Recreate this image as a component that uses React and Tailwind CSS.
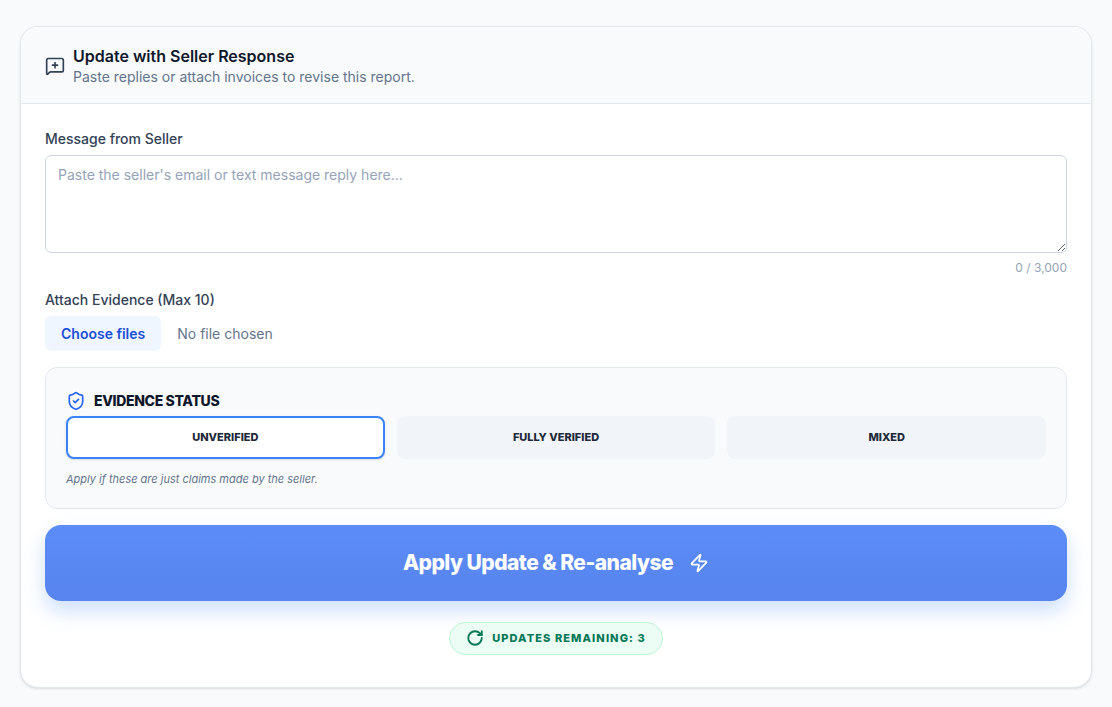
import React from "react";
import { MessageSquarePlus, ShieldCheck, Zap, RotateCw } from "lucide-react";

export default function App() {
  return (
    <div className="min-h-[707px] bg-[#f8fafc] pt-[26px] px-5 pb-4" style={{ fontFamily: "Inter, 'Noto Sans', sans-serif" }}>
      <div className="w-[1072px] bg-white border border-[#e2e8f0] rounded-[18px] shadow-sm overflow-hidden">
        <div className="flex items-start gap-2 bg-[#f8fafc] border-b border-[#e2e8f0] px-6 pt-[19px] h-[77px]">
          <MessageSquarePlus className="w-5 h-5 text-[#334155] mt-[10px]" strokeWidth={2} />
          <div>
            <div className="text-[16px] font-semibold text-[#0f172a] leading-[20px]">Update with Seller Response</div>
            <div className="text-[14px] text-[#64748b] leading-[22px]">Paste replies or attach invoices to revise this report.</div>
          </div>
        </div>
        <div className="px-6 pt-[24px] pb-8">
          <div className="text-[14px] text-[#334155] font-medium mb-[6px]">Message from Seller</div>
          <textarea className="block w-full h-[98px] border border-[#cbd5e1] rounded-md px-3 py-2 text-[14px] text-[#334155] placeholder-[#94a3b8] outline-none" placeholder="Paste the seller's email or text message reply here..." />
          <div className="text-right text-[12px] text-[#94a3b8] mt-[6px]">0 / 3,000</div>
          <div className="text-[14px] text-[#334155] font-medium mt-[12px]">Attach Evidence (Max 10)</div>
          <div className="flex items-center gap-4 mt-[6px]">
            <div className="bg-[#eff6ff] text-[#1d4ed8] font-semibold text-[14px] rounded-md px-4 h-[35px] flex items-center">Choose files</div>
            <div className="text-[14px] text-[#64748b]">No file chosen</div>
          </div>
          <div className="mt-[16px] border border-[#e2e8f0] bg-[#f8fafc] rounded-xl px-5 pt-[22px] pb-[20px]">
            <div className="flex items-center gap-2 mb-[5px]">
              <ShieldCheck className="w-5 h-5 text-[#2563eb]" />
              <span className="text-[14px] font-extrabold tracking-tight text-[#0f172a]">EVIDENCE STATUS</span>
            </div>
            <div className="grid grid-cols-3 gap-3">
              <div className="h-[43px] rounded-lg bg-white border-2 border-[#3b82f6] shadow-sm flex items-center justify-center text-[11px] font-extrabold text-[#1e293b]">UNVERIFIED</div>
              <div className="h-[43px] rounded-lg bg-[#f1f5f9] flex items-center justify-center text-[11px] font-extrabold text-[#1e293b]">FULLY VERIFIED</div>
              <div className="h-[43px] rounded-lg bg-[#f1f5f9] flex items-center justify-center text-[11px] font-extrabold text-[#1e293b]">MIXED</div>
            </div>
            <div className="mt-[12px] text-[11px] italic text-[#64748b]">Apply if these are just claims made by the seller.</div>
          </div>
          <div className="mt-[16px] h-[76px] rounded-2xl bg-gradient-to-b from-[#5b8cf7] to-[#5784ef] shadow-[0_10px_20px_rgba(59,130,246,0.25)] flex items-center justify-center gap-4 text-white">
            <span className="text-[21px] font-extrabold tracking-tight">Apply Update &amp; Re-analyse</span>
            <Zap className="w-5 h-5" />
          </div>
          <div className="flex justify-center mt-[21px]">
            <div className="flex items-center gap-2 h-[33px] px-4 rounded-full bg-[#ecfdf5] border border-[#bbf7d0] text-[#047857]">
              <RotateCw className="w-[18px] h-[18px]" strokeWidth={2.5} />
              <span className="text-[11px] font-extrabold tracking-[0.1em]">UPDATES REMAINING: 3</span>
            </div>
          </div>
        </div>
      </div>
    </div>
  );
}
